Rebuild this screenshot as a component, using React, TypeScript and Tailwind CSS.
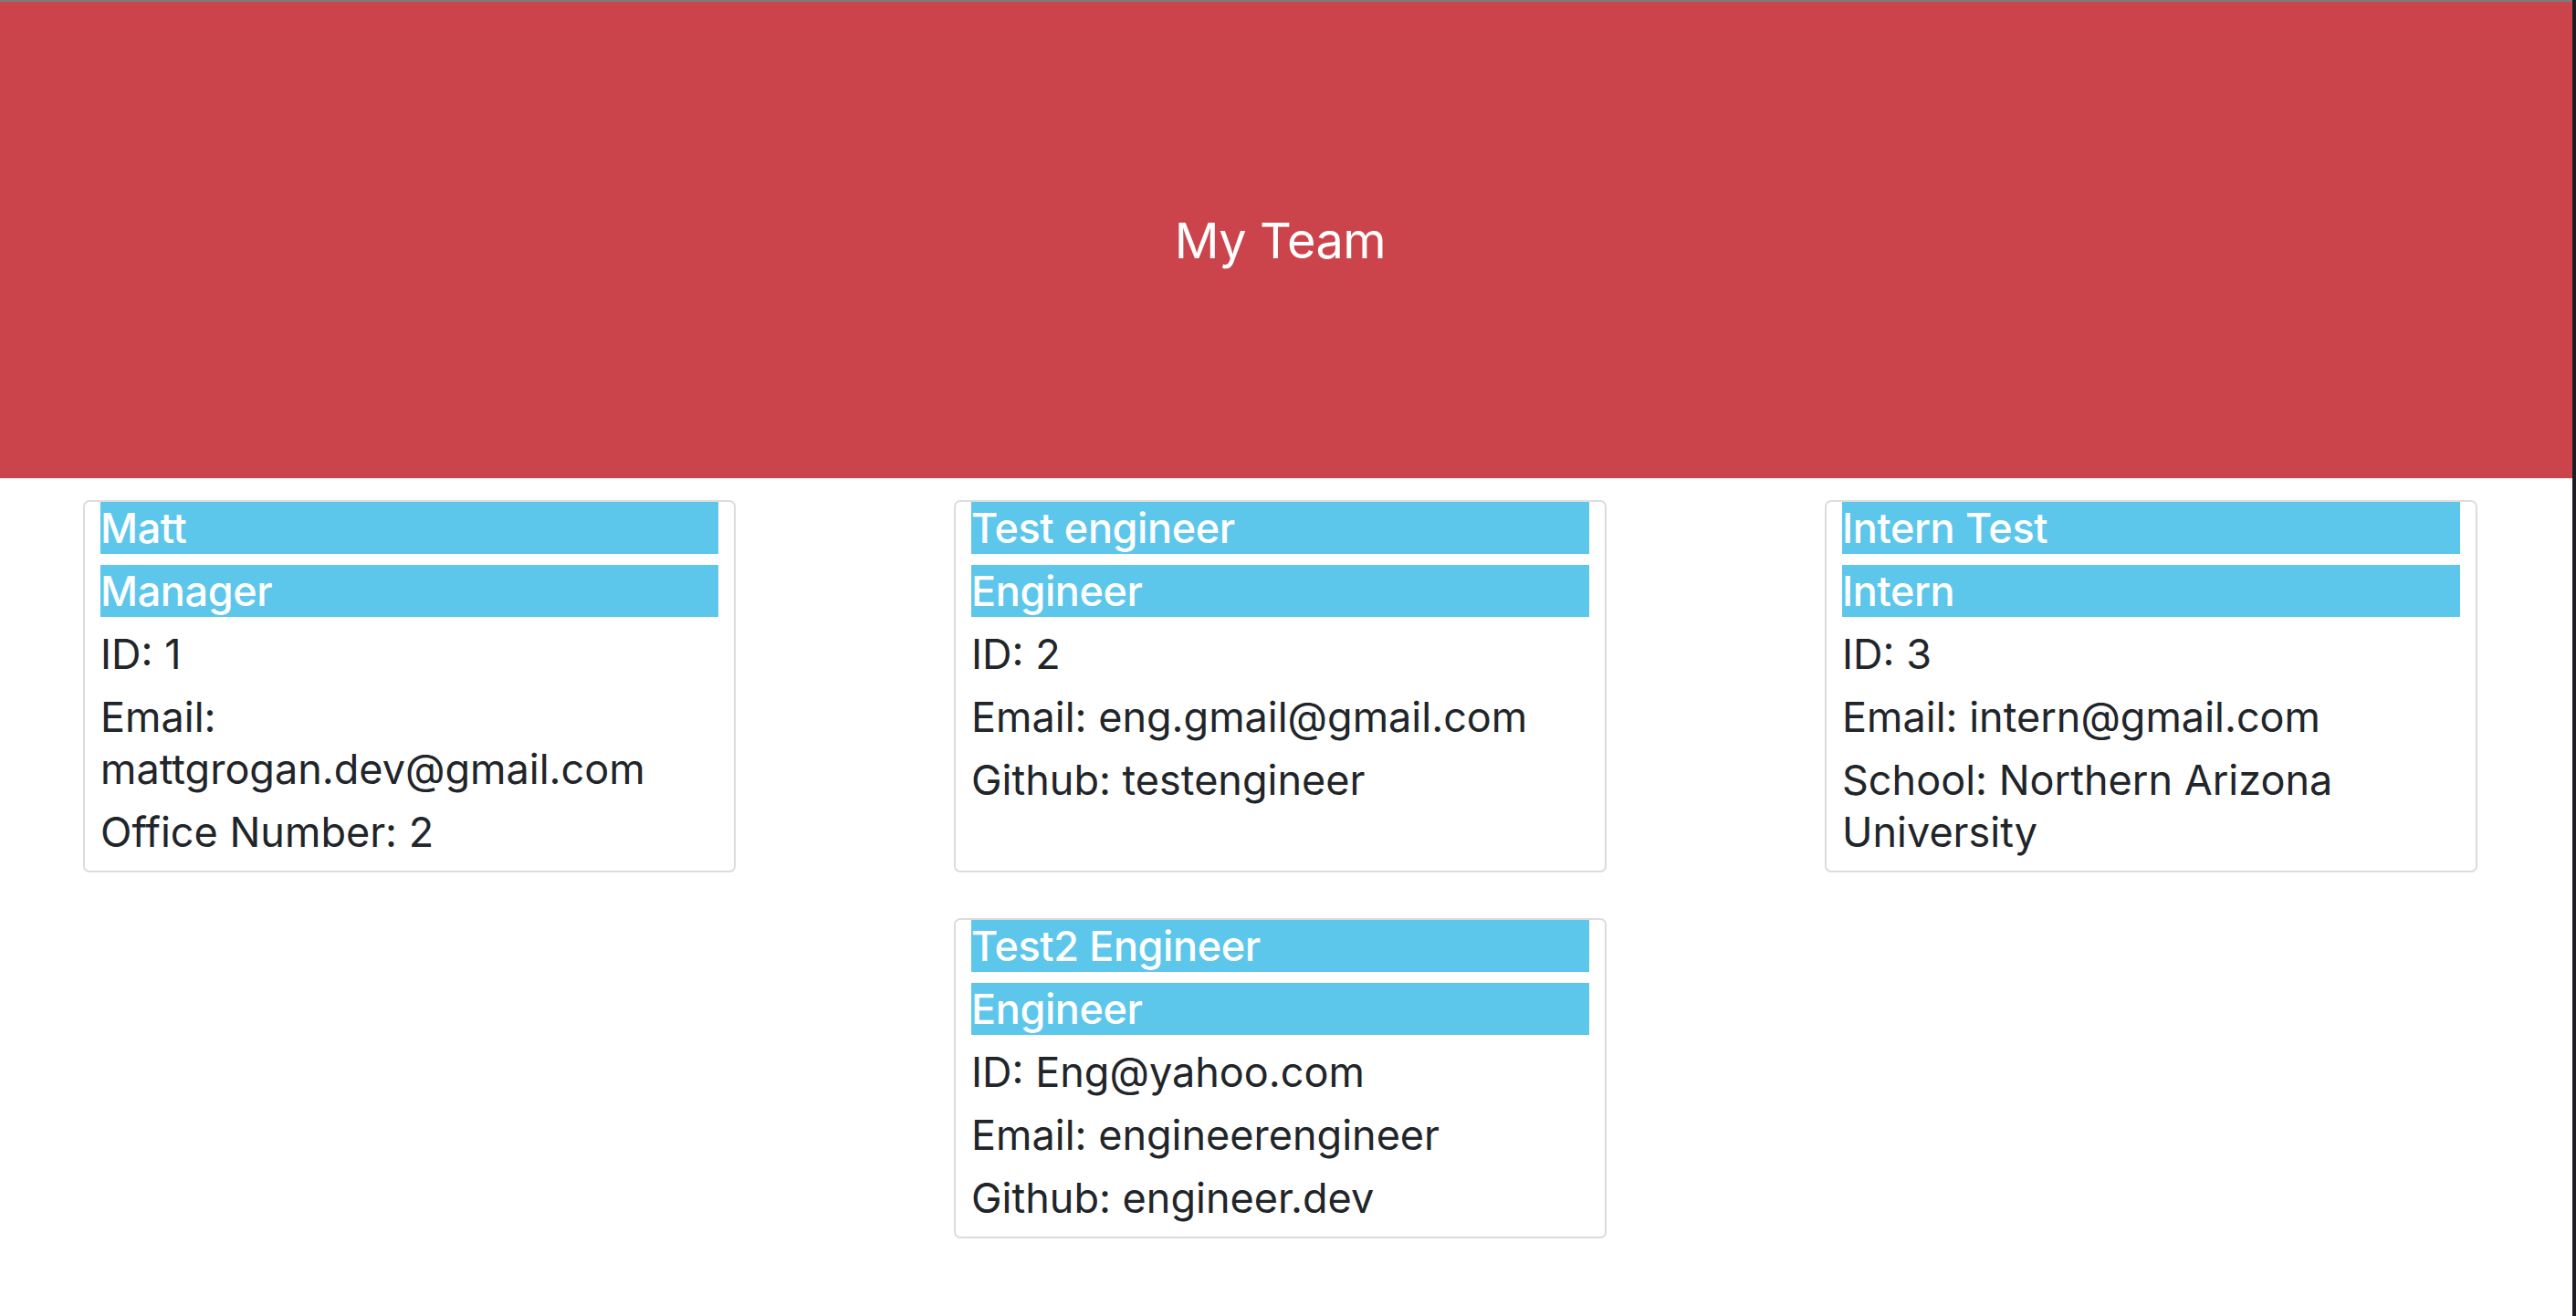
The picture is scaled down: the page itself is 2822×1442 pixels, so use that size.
import React from "react";

type Member = {
  name: string;
  role: string;
  lines: string[];
};

const TEAM: Member[] = [
  {
    name: "Matt",
    role: "Manager",
    lines: ["ID: 1", "Email: mattgrogan.dev@gmail.com", "Office Number: 2"],
  },
  {
    name: "Test engineer",
    role: "Engineer",
    lines: ["ID: 2", "Email: eng.gmail@gmail.com", "Github: testengineer"],
  },
  {
    name: "Intern Test",
    role: "Intern",
    lines: ["ID: 3", "Email: intern@gmail.com", "School: Northern Arizona University"],
  },
  {
    name: "Test2 Engineer",
    role: "Engineer",
    lines: ["ID: Eng@yahoo.com", "Email: engineerengineer", "Github: engineer.dev"],
  },
];

const Card: React.FC<{ member: Member; className?: string }> = ({ member, className }) => (
  <div
    className={`flex flex-col gap-[12px] rounded-[7px] border-2 border-[#dcdcdc] bg-white px-[17px] pt-0 pb-[14px] ${
      className || ""
    }`}
  >
    <h5 className="bg-[#5dc6eb] font-medium text-white leading-[57px] tracking-[-0.4px]">{member.name}</h5>
    <h5 className="bg-[#5dc6eb] font-medium text-white leading-[57px] tracking-[-0.4px]">{member.role}</h5>
    {member.lines.map((line) => (
      <p key={line} className="leading-[57px] text-[#212529]">
        {line}
      </p>
    ))}
  </div>
);

export default function App() {
  return (
    <div className="flex min-h-screen w-full bg-white font-['Inter','Noto_Sans',sans-serif]">
      <div className="flex flex-1 flex-col">
        <div className="h-[2px] bg-[#7b7b80]" />
        <header className="flex h-[522px] items-center justify-center bg-[#cc444b] pr-[13px]">
          <h1 className="text-[54px] tracking-[-0.5px] text-white">My Team</h1>
        </header>

        <main className="w-[2805px] px-[91px] pt-[24px]">
          <div className="grid grid-cols-[715px_715px_715px] justify-between gap-y-[50px] text-[45px]">
            <Card member={TEAM[0]} />
            <Card member={TEAM[1]} />
            <Card member={TEAM[2]} />
            <Card member={TEAM[3]} className="col-start-2" />
          </div>
        </main>
      </div>
      <div className="w-[4px] bg-[#1d1d25]" />
    </div>
  );
}
